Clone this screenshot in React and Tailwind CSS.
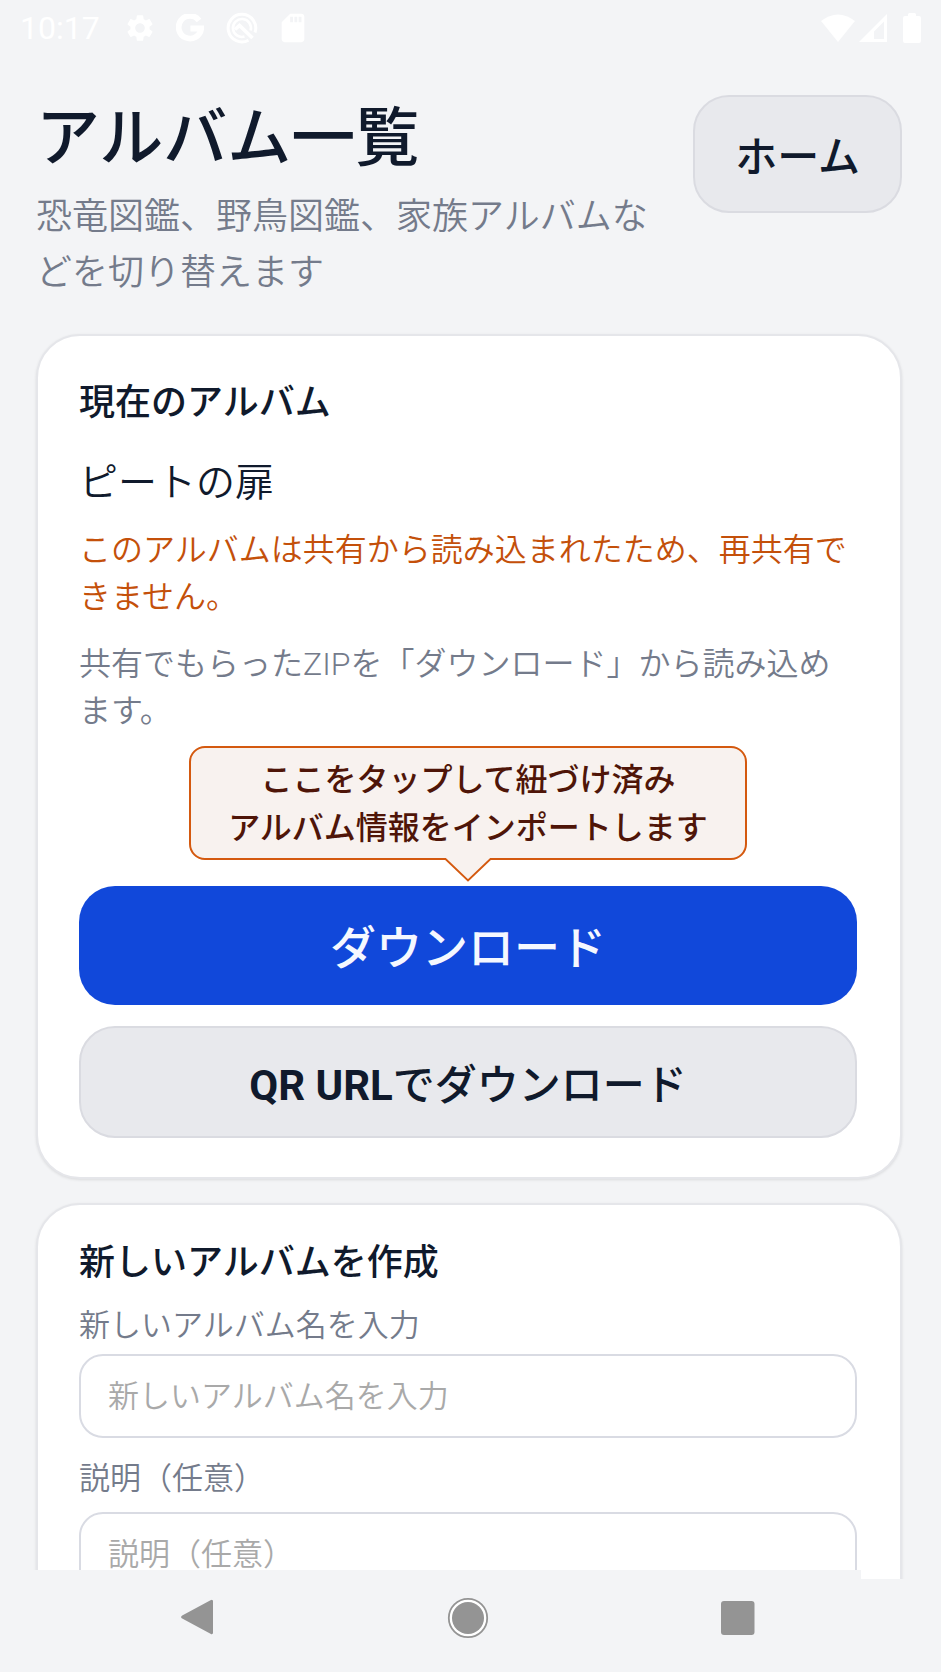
import React, { useState } from 'react';

const StatusBar = () => (
  <div className="flex h-14 shrink-0 items-center justify-between pl-5 pr-5 text-white">
    <div className="flex items-center">
      <span className="text-[32px] leading-10">10:17</span>
      {/* Settings */}
      <svg className="ml-6 h-8 w-8" viewBox="0 0 24 24" fill="currentColor" aria-hidden="true">
        <path d="M19.14 12.94c.04-.3.06-.61.06-.94 0-.32-.02-.64-.07-.94l2.03-1.58c.18-.14.23-.41.12-.61l-1.92-3.32c-.12-.22-.37-.29-.59-.22l-2.39.96c-.5-.38-1.03-.7-1.62-.94l-.36-2.54c-.04-.24-.24-.41-.48-.41h-3.84c-.24 0-.43.17-.47.41l-.36 2.54c-.59.24-1.13.57-1.62.94l-2.39-.96c-.22-.08-.47 0-.59.22L2.74 8.87c-.12.21-.08.47.12.61l2.03 1.58c-.05.3-.09.63-.09.94s.02.64.07.94l-2.03 1.58c-.18.14-.23.41-.12.61l1.92 3.32c.12.22.37.29.59.22l2.39-.96c.5.38 1.03.7 1.62.94l.36 2.54c.05.24.24.41.48.41h3.84c.24 0 .44-.17.47-.41l.36-2.54c.59-.24 1.13-.56 1.62-.94l2.39.96c.22.08.47 0 .59-.22l1.92-3.32c.12-.22.07-.47-.12-.61l-2.01-1.58zM12 15.6c-1.98 0-3.6-1.62-3.6-3.6s1.62-3.6 3.6-3.6 3.6 1.62 3.6 3.6-1.62 3.6-3.6 3.6z" />
      </svg>
      {/* Google */}
      <svg className="ml-5 h-7 w-7" viewBox="0 0 28 28" fill="none" stroke="currentColor" strokeWidth="5.8" aria-hidden="true">
        <path d="M23 6.4A11.3 11.3 0 1 0 25.2 14.500H14.4" />
      </svg>
      {/* Search lens */}
      <svg className="ml-[22px] h-8 w-8" viewBox="0 0 32 32" fill="none" stroke="currentColor" strokeWidth="3" aria-hidden="true">
        <path d="M22.500 28.2A13.8 13.8 0 1 1 29 20.500" />
        <path d="M18.500 24.600A9 9 0 1 1 24.600 18.500" strokeWidth="2.600" />
        <path d="M9 17.500L13.500 13.500l13 12.500" strokeWidth="3.600" />
      </svg>
      {/* SD card */}
      <svg className="ml-[18px] h-[34px] w-[34px]" viewBox="0 0 24 24" fill="currentColor" aria-hidden="true">
        <path d="M18 2h-8L4.02 8 4 20c0 1.1.9 2 2 2h12c1.1 0 2-.9 2-2V4c0-1.1-.9-2-2-2zm-6 6h-2V4h2v4zm3 0h-2V4h2v4zm3 0h-2V4h2v4z" />
      </svg>
    </div>
    <div className="flex items-center">
      <svg className="h-7 w-[34px]" viewBox="0 0 34 28" fill="currentColor" aria-hidden="true">
        <path d="M0 7Q17-6 34 7L17 28z" />
      </svg>
      <svg className="ml-1 h-7 w-7" viewBox="0 0 28 28" fill="currentColor" aria-hidden="true">
        <path fillRule="evenodd" d="M28 0v28H0zM25 7.5L15 17.5V25h10z" />
      </svg>
      <svg className="ml-4 h-[30px] w-[18px]" viewBox="0 0 18 30" fill="currentColor" aria-hidden="true">
        <path d="M5 1.5Q5 0 6.500 0h5Q13 0 13 1.500V3h3q2 0 2 2v23q0 2-2 2H2q-2 0-2-2V5q0-2 2-2h3z" />
      </svg>
    </div>
  </div>
);

const Card = ({ className, children }) => (
  <section
    className={`flex flex-col rounded-[44px] border-2 border-[#e5e6ea] bg-white pl-[41px] pr-[43px] shadow-[0_1px_3px_rgba(0,0,0,0.1)] ${className}`}
  >
    {children}
  </section>
);

const DownloadHint = () => (
  <div className="relative mt-[11px] self-center rounded-2xl border-2 border-[#d4590f] bg-[#f8f2ef] px-[37px] pt-2 pb-1.5 text-center text-[32px] leading-12 font-medium text-[#4f1508]">
    <p>ここをタップして紐づけ済み</p>
    <p>アルバム情報をインポートします</p>
    <svg className="absolute top-full left-1/2 h-6 w-12 -translate-x-1/2" viewBox="0 0 48 24" aria-hidden="true">
      <path d="M1 0h46v2h-1L24 22.500 2 2H1z" fill="#f8f2ef" />
      <path d="M0 1h1.500L24 22.500 46.500 1H48" fill="none" stroke="#d4590f" strokeWidth="1.800" />
    </svg>
  </div>
);

const NavigationBar = () => (
  <nav className="relative flex h-[93px] shrink-0 items-start bg-[#f3f4f6] pt-[18px] text-[#949494]">
    {/* Edge that overlaps the scrolling content */}
    <div className="absolute bottom-full left-0 right-20 h-[9px] bg-[#f3f4f6]" />
    <div className="flex w-full justify-between pl-[177px] pr-[183px]">
      <button type="button" aria-label="戻る">
        <svg className="h-10 w-10" viewBox="0 0 40 40" fill="currentColor">
          <path d="M33.500 2.300Q36 .8 36 3.600V34.400Q36 37.200 33.500 35.700L5.200 20.600Q3 19 5.200 17.400z" />
        </svg>
      </button>
      <button type="button" aria-label="ホーム画面">
        <svg className="h-[42px] w-[42px]" viewBox="0 0 42 42">
          <circle cx="21" cy="21" r="19.200" fill="#fff" stroke="currentColor" strokeWidth="1.800" />
          <circle cx="21" cy="21" r="16" fill="currentColor" />
        </svg>
      </button>
      <button type="button" aria-label="最近使ったアプリ">
        <svg className="h-10 w-10" viewBox="0 0 40 40" fill="currentColor">
          <rect x="3" y="3" width="33.500" height="34" rx="3" />
        </svg>
      </button>
    </div>
  </nav>
);

export default function App() {
  const [albumName, setAlbumName] = useState('');
  const [description, setDescription] = useState('');

  return (
    <div
      lang="ja"
      className="flex h-screen flex-col overflow-hidden bg-[#f3f4f6] font-[Roboto,'Noto_Sans_CJK_JP',sans-serif] text-[#101a2c]"
    >
      <StatusBar />

      <main className="min-h-0 flex-1 overflow-hidden pl-9 pr-[39px] pt-[39px]">
        <header className="flex items-start justify-between gap-6">
          <div className="pt-[2px]">
            <h1 className="text-[64px] leading-[84px] font-medium">アルバム一覧</h1>
            <p className="mt-2 text-[36px] leading-14 font-[350] text-[#747b8b]">
              恐竜図鑑、野鳥図鑑、家族アルバムなどを切り替えます
            </p>
          </div>
          <button
            type="button"
            className="h-[118px] shrink-0 rounded-[36px] border-2 border-[#dadbe1] bg-[#e8e9ed] px-10 pt-1.5 text-[42px] font-medium"
          >
            ホーム
          </button>
        </header>

        {/* Current album */}
        <Card className="mt-[33px] pt-[43px] pb-[39px]">
          <h2 className="text-[36px] leading-12 font-medium">現在のアルバム</h2>
          <p className="mt-7 text-[39px] leading-14 font-[350]">ピートの扉</p>
          <p className="mt-4 text-[32px] leading-[47px] font-[350] text-[#c4500a]">
            このアルバムは共有から読み込まれたため、再共有できません。
          </p>
          <p className="mt-5 text-[32px] leading-[47px] font-[350] text-[#747b8b]">
            共有でもらったZIPを「ダウンロード」から読み込めます。
          </p>
          <DownloadHint />
          <button
            type="button"
            className="mt-[26px] h-[119px] rounded-[36px] bg-[#1148da] pt-1.5 text-[46px] font-medium text-[#f5f8ff]"
          >
            ダウンロード
          </button>
          <button
            type="button"
            className="mt-[21px] h-[112px] rounded-[36px] border-2 border-[#dadbe1] bg-[#e8e9ed] pt-1.5 text-[42px] font-medium"
          >
            <span className="font-bold">QR URL</span>でダウンロード
          </button>
        </Card>

        {/* New album */}
        <Card className="mt-6 pt-[34px] pb-10">
          <h2 className="text-[36px] leading-12 font-medium">新しいアルバムを作成</h2>
          <label htmlFor="albumName" className="mt-4 text-[31px] leading-[46px] font-[350] text-[#747b8b]">
            新しいアルバム名を入力
          </label>
          <input
            type="text"
            id="albumName"
            value={albumName}
            onChange={(e) => setAlbumName(e.target.value)}
            placeholder="新しいアルバム名を入力"
            className="mt-[5px] h-[84px] rounded-3xl border-2 border-[#d9dbe3] bg-white px-[27px] text-[31px] font-[350] placeholder:text-[#a9a9a9] focus:outline-none"
          />
          <label htmlFor="description" className="mt-[18px] text-[31px] leading-[46px] font-[350] text-[#747b8b]">
            説明（任意）
          </label>
          <input
            type="text"
            id="description"
            value={description}
            onChange={(e) => setDescription(e.target.value)}
            placeholder="説明（任意）"
            className="mt-[10px] h-[84px] rounded-3xl border-2 border-[#d9dbe3] bg-white px-[27px] text-[31px] font-[350] placeholder:text-[#a9a9a9] focus:outline-none"
          />
        </Card>
      </main>

      <NavigationBar />
    </div>
  );
}
